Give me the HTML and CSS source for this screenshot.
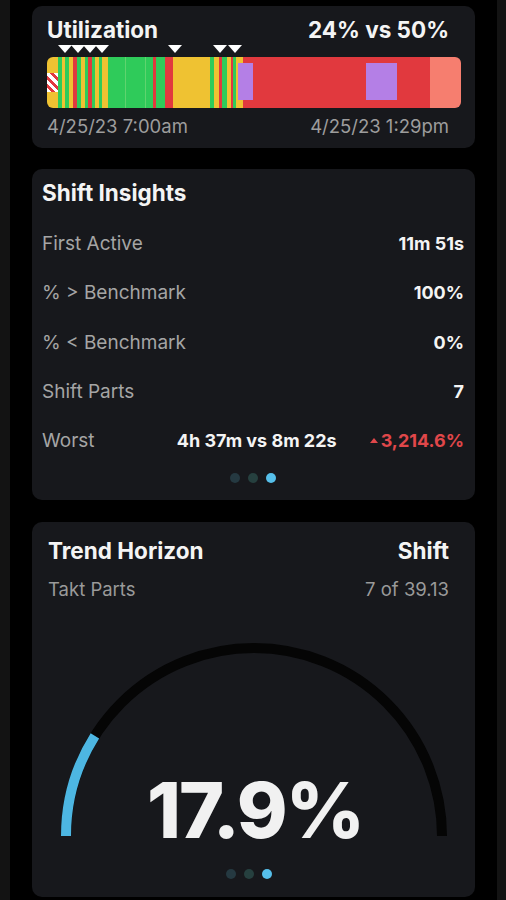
FILE: index.html
```html
<!DOCTYPE html>
<html>
<head>
<meta charset="utf-8">
<link rel="stylesheet" href="styles.css">
</head>
<body>
<div class="screen">
  <section class="card util">
    <div class="util-head">
      <h2 class="title">Utilization</h2>
      <span class="title">24% vs 50%</span>
    </div>
    <div class="markers">
      <span class="marker" style="left:2.66%"></span>
      <span class="marker" style="left:5.8%"></span>
      <span class="marker" style="left:8.7%"></span>
      <span class="marker" style="left:11.59%"></span>
      <span class="marker" style="left:29.23%"></span>
      <span class="marker" style="left:40.1%"></span>
      <span class="marker" style="left:43.72%"></span>
    </div>
    <div class="bar">
      <span class="seg y" style="flex:11"></span>
      <span class="seg g" style="flex:4"></span>
      <span class="seg y" style="flex:3"></span>
      <span class="seg g" style="flex:4"></span>
      <span class="seg y" style="flex:4"></span>
      <span class="seg r" style="flex:4"></span>
      <span class="seg g" style="flex:4"></span>
      <span class="seg y" style="flex:4"></span>
      <span class="seg g" style="flex:3"></span>
      <span class="seg r" style="flex:4"></span>
      <span class="seg g" style="flex:3"></span>
      <span class="seg y" style="flex:4"></span>
      <span class="seg g" style="flex:3"></span>
      <span class="seg y" style="flex:6"></span>
      <span class="seg g" style="flex:17"></span>
      <span class="seg gl" style="flex:1"></span>
      <span class="seg g" style="flex:19"></span>
      <span class="seg gl" style="flex:1"></span>
      <span class="seg g" style="flex:7"></span>
      <span class="seg r" style="flex:3"></span>
      <span class="seg g" style="flex:9"></span>
      <span class="seg r" style="flex:8"></span>
      <span class="seg y" style="flex:37"></span>
      <span class="seg g" style="flex:4"></span>
      <span class="seg y" style="flex:5"></span>
      <span class="seg r" style="flex:3"></span>
      <span class="seg g" style="flex:5"></span>
      <span class="seg y" style="flex:4"></span>
      <span class="seg r" style="flex:2"></span>
      <span class="seg g" style="flex:3"></span>
      <span class="seg y" style="flex:7"></span>
      <span class="seg r" style="flex:187"></span>
      <span class="seg s" style="flex:31"></span>
      <span class="hatch"></span>
      <span class="block" style="left:46.14%;width:3.62%"></span>
      <span class="block" style="left:77.05%;width:7.49%"></span>
    </div>
    <div class="dates">
      <span>4/25/23 7:00am</span>
      <span>4/25/23 1:29pm</span>
    </div>
  </section>

  <section class="card insights">
    <h2 class="title">Shift Insights</h2>
    <div class="rows">
      <div class="row"><span class="label">First Active</span><span class="value">11m 51s</span></div>
      <div class="row"><span class="label">% &gt; Benchmark</span><span class="value">100%</span></div>
      <div class="row"><span class="label">% &lt; Benchmark</span><span class="value">0%</span></div>
      <div class="row"><span class="label">Shift Parts</span><span class="value">7</span></div>
      <div class="row"><span class="label">Worst</span><span class="value mid">4h 37m vs 8m 22s</span><span class="delta"><span class="up"></span>3,214.6%</span></div>
    </div>
    <div class="dots"><span class="dot"></span><span class="dot dot2"></span><span class="dot on"></span></div>
  </section>

  <section class="card trend">
    <div class="trend-head">
      <h2 class="title">Trend Horizon</h2>
      <span class="title">Shift</span>
    </div>
    <div class="trend-sub">
      <span>Takt Parts</span>
      <span>7 of 39.13</span>
    </div>
    <div class="gauge">
      <svg class="arc" width="386" height="198" viewBox="0 0 386 198">
        <path d="M 5 193 A 188 188 0 0 1 381 193" fill="none" stroke="#050505" stroke-width="10"/>
        <path d="M 5 193 A 188 188 0 0 1 33.9 92.8" fill="none" stroke="#4db6e2" stroke-width="10"/>
      </svg>
      <div class="big">17.9%</div>
    </div>
    <div class="dots"><span class="dot"></span><span class="dot dot2"></span><span class="dot on"></span></div>
  </section>
</div>
</body>
</html>
```

FILE: styles.css
```css
* { box-sizing: border-box; }
html, body { margin: 0; padding: 0; }
body {
  background: #131313;
  font-family: Inter, "Noto Sans", sans-serif;
  color: #f2f2f2;
}
.screen {
  margin: 0 9px 0 10px;
  background: #000;
  min-height: 900px;
  padding: 6px 22px 0;
  display: flex;
  flex-direction: column;
}
.card {
  background: #17181c;
  border-radius: 10px;
}
.title {
  margin: 0;
  font-size: 22.5px;
  line-height: 26px;
  font-weight: 700;
  color: #f4f4f4;
}

/* Utilization */
.util {
  padding: 11px 14px 10px 15px;
  height: 142px;
}
.util-head, .dates {
  display: flex;
  justify-content: space-between;
  padding-right: 12px;
}
.markers {
  position: relative;
  height: 14px;
}
.marker {
  position: absolute;
  top: 2px;
  width: 0;
  height: 0;
  border-left: 7px solid transparent;
  border-right: 7px solid transparent;
  border-top: 8px solid #fff;
}
.bar {
  position: relative;
  display: flex;
  height: 51px;
  border-radius: 6px;
  overflow: hidden;
}
.seg { min-width: 0; }
.y { background: #efc232; }
.g { background: #2fcb5a; }
.gl { background: #5fd46e; }
.r { background: #e1393e; }
.s { background: #f67e6f; }
.hatch {
  position: absolute;
  left: 0;
  top: 16px;
  width: 11px;
  height: 19px;
  background: repeating-linear-gradient(45deg, #fff 0 3px, #e1393e 3px 6px);
}
.block {
  position: absolute;
  top: 6px;
  height: 37px;
  background: #b47fe6;
}
.dates {
  margin-top: 7px;
  font-size: 18.5px;
  line-height: 22px;
  color: #9d9d9d;
}

/* Shift insights */
.card.insights {
  margin-top: 21px;
  height: 331px;
  padding: 11px 11px 0 10px;
}
.rows {
  margin-top: 13px;
}
.row {
  display: flex;
  align-items: center;
  height: 49.25px;
}
.label {
  font-size: 19px;
  color: #a5a5a5;
}
.value {
  margin-left: auto;
  font-size: 18px;
  font-weight: 700;
  color: #f4f4f4;
}
.delta {
  margin-left: 33px;
  font-size: 18px;
  font-weight: 700;
  color: #e0474a;
  display: flex;
  align-items: center;
}
.up {
  width: 0;
  height: 0;
  border-left: 4px solid transparent;
  border-right: 4px solid transparent;
  border-bottom: 5px solid #e0474a;
  margin-right: 3px;
}
.dots {
  display: flex;
  justify-content: center;
  gap: 8px;
  margin-top: 8px;
}
.dot {
  width: 10px;
  height: 10px;
  border-radius: 50%;
  background: #253941;
}
.dot2 { background: #26403f; }
.dot.on { background: #56bfea; }

/* Trend */
.card.trend {
  margin-top: 22px;
  height: 375px;
  padding: 16px 26px 0 16px;
}
.trend-head, .trend-sub {
  display: flex;
  justify-content: space-between;
}
.trend-sub {
  margin-top: 13.5px;
  font-size: 18.5px;
  line-height: 22px;
  color: #9a9a9a;
}
.gauge {
  display: grid;
  justify-items: center;
  margin: 43.5px -26px 0 -16px;
}
.arc, .big { grid-area: 1 / 1; }
.big {
  align-self: end;
  font-size: 77px;
  font-weight: 800;
  line-height: 66px;
  letter-spacing: -2px;
  color: #f1f1f1;
  margin-bottom: -2px;
  padding-left: 3px;
}
.trend .dots {
  margin-top: 28px;
}
```
